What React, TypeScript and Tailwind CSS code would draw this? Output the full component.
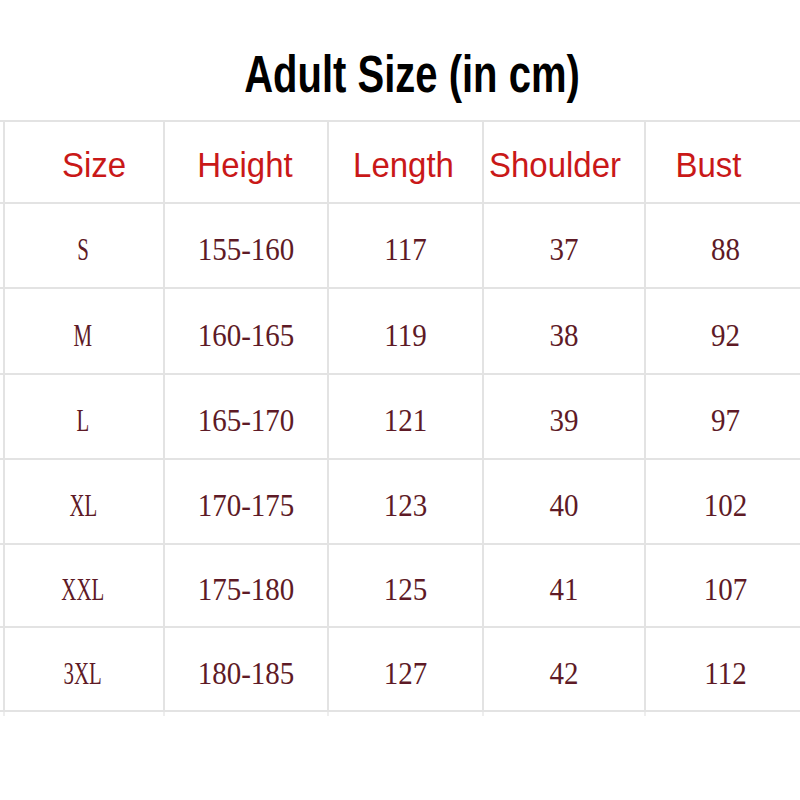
import React from "react";

const HEADERS = [
  { label: "Size", cls: "pl-[20px]" },
  { label: "Height", cls: "pr-[2px]" },
  { label: "Length", cls: "pr-[4px]" },
  { label: "Shoulder", cls: "pr-[18px]" },
  { label: "Bust", cls: "pr-[32px]" },
];

const ROWS = [
  { h: "h-[85px]", cells: ["S", "155-160", "117", "37", "88"] },
  { h: "h-[86px]", cells: ["M", "160-165", "119", "38", "92"] },
  { h: "h-[85px]", cells: ["L", "165-170", "121", "39", "97"] },
  { h: "h-[85px]", cells: ["XL", "170-175", "123", "40", "102"] },
  { h: "h-[83px]", cells: ["XXL", "175-180", "125", "41", "107"] },
  { h: "h-[84px]", cells: ["3XL", "180-185", "127", "42", "112"] },
];

const WIDTHS = ["w-[160px]", "w-[164px]", "w-[155px]", "w-[162px]", "w-[159px]"];
const DATA_PAD = ["pr-[2px]", "", "", "", "pl-[2px]"];
// the size letters are set half-width in the original, so squeeze them
const DATA_SCALE = ["scale-x-[0.72]", "", "", "", ""];

export default function App() {
  return (
    <div className="w-[800px] h-[800px] bg-white overflow-hidden">
      <div className="h-[120px] flex justify-center pl-[24px] pt-[48px]">
        <h1
          className="inline-block h-fit text-[40px] leading-none font-bold text-black scale-y-[1.3] origin-top"
          style={{ fontFamily: '"Liberation Sans", Arial, sans-serif' }}
        >
          Adult Size (in cm)
        </h1>
      </div>

      <div className="w-[800px]">
        <div className="flex h-[84px] pl-[3px] border-t-2 border-b-2 border-[#e3e3e3]">
          {HEADERS.map((hd, i) => (
            <div
              key={hd.label}
              className={`${WIDTHS[i]} shrink-0 border-l-2 border-[#e3e3e3] flex items-center justify-center pt-[4px] ${hd.cls}`}
            >
              <span
                className="inline-block text-[33px] leading-none text-[#c91818] scale-y-[1.06]"
                style={{ fontFamily: '"Liberation Sans", Arial, sans-serif' }}
              >
                {hd.label}
              </span>
            </div>
          ))}
        </div>

        {ROWS.map((row) => (
          <div
            key={row.cells[0]}
            className={`flex ${row.h} pl-[3px] border-b-2 border-[#e3e3e3]`}
          >
            {row.cells.map((c, i) => (
              <div
                key={i}
                className={`${WIDTHS[i]} shrink-0 border-l-2 border-[#e3e3e3] flex items-center justify-center pt-[8px] ${DATA_PAD[i]}`}
              >
                <span
                  className={`inline-block text-[29px] leading-none text-[#5e1a26] scale-y-[1.12] ${DATA_SCALE[i]}`}
                  style={{ fontFamily: '"Liberation Serif", "Times New Roman", serif' }}
                >
                  {c}
                </span>
              </div>
            ))}
          </div>
        ))}

        <div className="flex h-[4px] pl-[3px]">
          {WIDTHS.map((w, i) => (
            <div key={i} className={`${w} shrink-0 border-l-2 border-[#eeeeee]`} />
          ))}
        </div>
      </div>
    </div>
  );
}
